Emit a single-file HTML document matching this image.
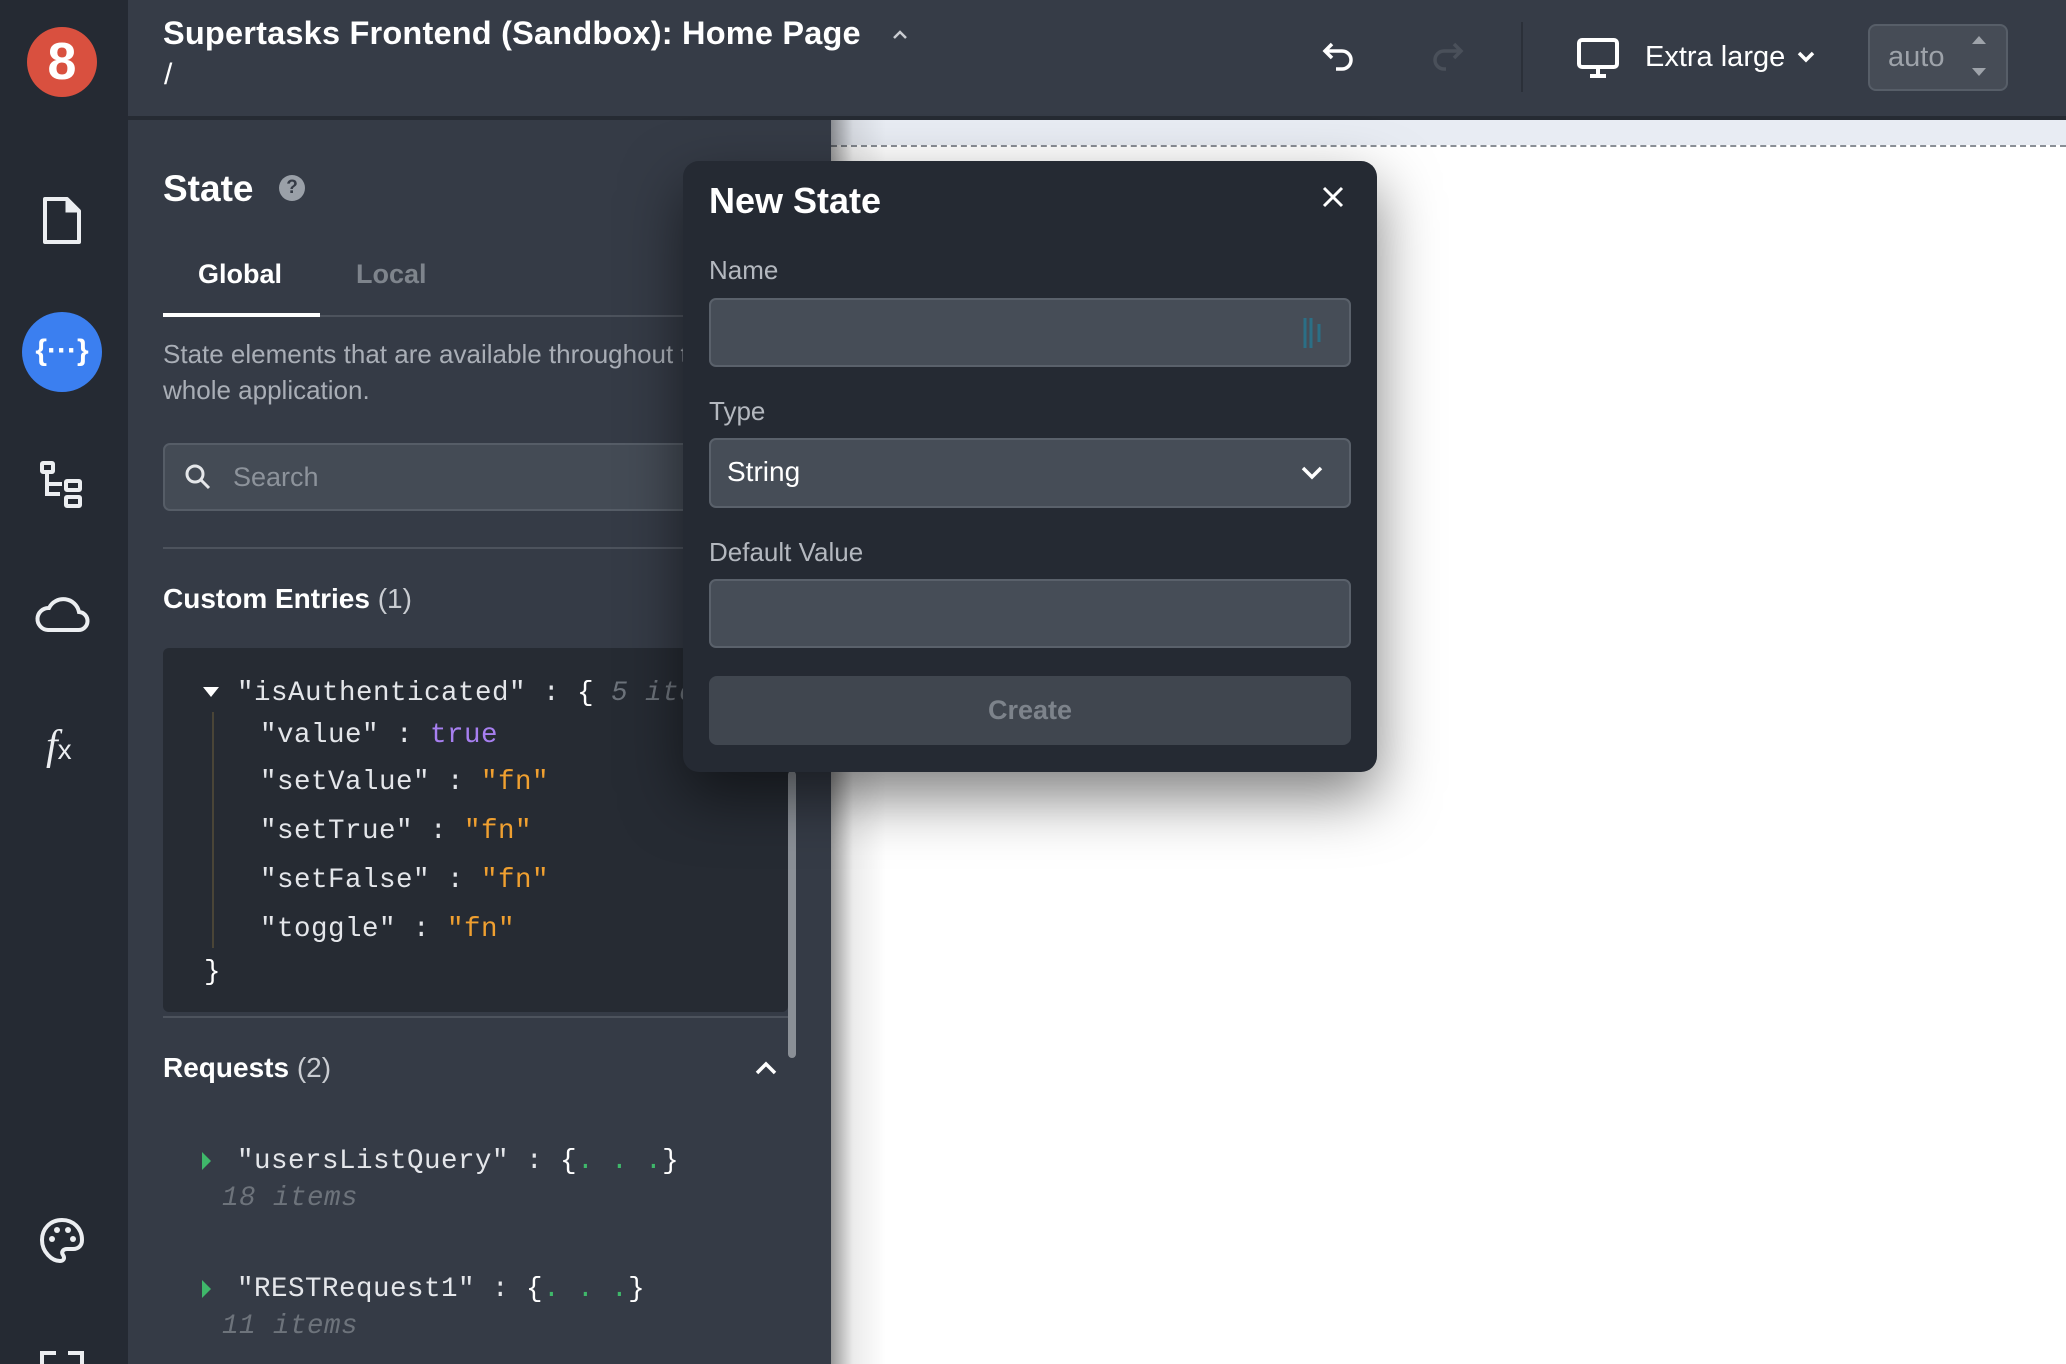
<!DOCTYPE html>
<html><head><meta charset="utf-8">
<style>
*{margin:0;padding:0;box-sizing:border-box}
body{width:2066px;height:1364px;overflow:hidden;background:#fff;font-family:"Liberation Sans",sans-serif;position:relative}
.a{position:absolute}
.mono{font-family:"Liberation Mono",monospace;font-size:27.5px;letter-spacing:0.5px;color:#e4e6ea;white-space:pre}
.lbl{color:#b4b8bf;font-size:26px}
.inp{background:#464d57;border:2px solid #5a616b;border-radius:7px}
</style></head><body>
<!-- canvas -->
<div class="a" style="left:831px;top:120px;width:1235px;height:25px;background:#e8ecf3"></div>
<div class="a" style="left:831px;top:145px;width:1235px;border-top:2px dashed #8a8f96"></div>
<div class="a" style="left:831px;top:120px;width:55px;height:1244px;background:linear-gradient(to right,rgba(0,0,0,0.4),rgba(0,0,0,0.08) 40%,rgba(0,0,0,0))"></div>
<!-- sidebar -->
<div class="a" style="left:0;top:0;width:128px;height:1364px;background:#252a33"></div>
<div class="a" style="left:27px;top:27px;width:70px;height:70px;border-radius:50%;background:#d9503f;color:#fff;font-weight:bold;font-size:52px;text-align:center;line-height:70px">8</div>
<svg class="a" style="left:40px;top:196px" width="44" height="50" viewBox="0 0 44 50"><path d="M5 3h22l12 12v31H5z" fill="none" stroke="#eceef1" stroke-width="4" stroke-linejoin="round"/><path d="M27 3v12h12" fill="#eceef1" stroke="#eceef1" stroke-width="3"/></svg>
<div class="a" style="left:22px;top:312px;width:80px;height:80px;border-radius:50%;background:#3b7ff0;color:#fff;font-size:30px;font-weight:bold;text-align:center;line-height:78px">{···}</div>
<svg class="a" style="left:38px;top:460px" width="50" height="50" viewBox="0 0 50 50" fill="none" stroke="#eceef1" stroke-width="4"><rect x="4" y="3" width="11" height="9" rx="1"/><path d="M9 14v20h13"/><rect x="28" y="21" width="14" height="9" rx="1"/><rect x="28" y="37" width="14" height="9" rx="1"/><path d="M9 24h15"/></svg>
<svg class="a" style="left:34px;top:594px" width="56" height="40" viewBox="0 0 56 40"><path d="M14 36h30a9 9 0 0 0 1-18A16 16 0 0 0 15 14 11 11 0 0 0 14 36z" fill="none" stroke="#eceef1" stroke-width="4"/></svg>
<div class="a" style="left:46px;top:722px;color:#eceef1;font-family:'Liberation Serif',serif;font-style:italic;font-size:42px">f<span style="font-size:28px;font-style:normal;font-family:'Liberation Sans'">x</span></div>
<svg class="a" style="left:38px;top:1216px" width="48" height="50" viewBox="0 0 48 50"><path d="M24 4C12 4 4 13 4 24c0 12 10 21 18 21 4 0 5-3 3-6-2-3 0-6 4-6h6c6 0 9-4 9-9C44 12 35 4 24 4z" fill="none" stroke="#eceef1" stroke-width="4"/><circle cx="14" cy="23" r="3" fill="#eceef1"/><circle cx="19" cy="14" r="3" fill="#eceef1"/><circle cx="30" cy="14" r="3" fill="#eceef1"/><circle cx="35" cy="23" r="3" fill="#eceef1"/></svg>
<svg class="a" style="left:40px;top:1350px" width="44" height="14"><path d="M2 14V3h14M42 14V3H28" fill="none" stroke="#eceef1" stroke-width="4"/></svg>
<!-- top bar -->
<div class="a" style="left:128px;top:0;width:1938px;height:116px;background:#363c47"></div>
<div class="a" style="left:128px;top:116px;width:1938px;height:4px;background:#262b33"></div>
<div class="a" style="left:163px;top:15px;color:#fff;font-weight:bold;font-size:32.5px;letter-spacing:0.2px;white-space:nowrap">Supertasks Frontend (Sandbox): Home Page</div>
<svg class="a" style="left:891px;top:28px" width="18" height="12"><path d="M3 10l6-6 6 6" fill="none" stroke="#c9ccd1" stroke-width="2.5"/></svg>
<div class="a" style="left:164px;top:58px;color:#fff;font-size:30px">/</div>
<svg class="a" style="left:1322px;top:40px" width="36" height="34" viewBox="0 0 36 34"><path d="M10 4L3 11l7 7" fill="none" stroke="#fff" stroke-width="3.5"/><path d="M4 11h16a9 9 0 0 1 0 18h-6" fill="none" stroke="#fff" stroke-width="3.5"/></svg>
<svg class="a" style="left:1428px;top:40px" width="36" height="34" viewBox="0 0 36 34"><path d="M26 4l7 7-7 7" fill="none" stroke="#4a505a" stroke-width="3.5"/><path d="M32 11H16a9 9 0 0 0 0 18h2" fill="none" stroke="#4a505a" stroke-width="3.5"/></svg>
<div class="a" style="left:1521px;top:22px;width:2px;height:70px;background:#2b3039"></div>
<svg class="a" style="left:1576px;top:37px" width="44" height="42" viewBox="0 0 44 42"><rect x="3" y="3" width="38" height="27" rx="3" fill="none" stroke="#fff" stroke-width="4"/><path d="M22 30v8M14 39h16" stroke="#fff" stroke-width="4"/></svg>
<div class="a" style="left:1645px;top:41px;color:#fff;font-size:29px">Extra large</div>
<svg class="a" style="left:1796px;top:50px" width="20" height="14"><path d="M3 3l7 7 7-7" fill="none" stroke="#fff" stroke-width="3.5"/></svg>
<div class="a" style="left:1868px;top:24px;width:140px;height:67px;background:#464c56;border:2px solid #575e68;border-radius:8px"></div>
<div class="a" style="left:1888px;top:41px;color:#9ea3aa;font-size:29px">auto</div>
<svg class="a" style="left:1970px;top:32px" width="18" height="48"><path d="M2 12l7-8 7 8z" fill="#9ea3aa"/><path d="M2 36l7 8 7-8z" fill="#9ea3aa"/></svg>
<!-- left panel -->
<div class="a" style="left:128px;top:120px;width:703px;height:1244px;background:#353b46"></div>
<div class="a" style="left:163px;top:168px;color:#fff;font-weight:bold;font-size:37px">State</div>
<div class="a" style="left:279px;top:175px;width:26px;height:26px;border-radius:50%;background:#9aa0a8;color:#353b46;font-weight:bold;font-size:19px;text-align:center;line-height:26px">?</div>
<div class="a" style="left:198px;top:259px;color:#fff;font-weight:bold;font-size:27px">Global</div>
<div class="a" style="left:356px;top:259px;color:#7e848c;font-weight:bold;font-size:27px">Local</div>
<div class="a" style="left:163px;top:315px;width:660px;height:2px;background:#4d535d"></div>
<div class="a" style="left:163px;top:313px;width:157px;height:4px;background:#fff"></div>
<div class="a" style="left:163px;top:337px;color:#a9aeb6;font-size:26px;line-height:35.5px;width:700px">State elements that are available throughout the<br>whole application.</div>
<div class="a inp" style="left:163px;top:443px;width:640px;height:68px;background:#444b55;border-color:#565d67"></div>
<svg class="a" style="left:184px;top:463px" width="28" height="28"><circle cx="11" cy="11" r="8" fill="none" stroke="#e5e7ea" stroke-width="3"/><path d="M17 17l8 8" stroke="#e5e7ea" stroke-width="3"/></svg>
<div class="a" style="left:233px;top:462px;color:#8d939b;font-size:27px">Search</div>
<div class="a" style="left:163px;top:547px;width:625px;height:2px;background:#4d535d"></div>
<div class="a" style="left:163px;top:583px;color:#fff;font-size:28px"><b>Custom Entries</b> <span style="color:#c9ccd1">(1)</span></div>
<div class="a" style="left:163px;top:648px;width:625px;height:364px;background:#262b33;border-radius:6px"></div>
<svg class="a" style="left:202px;top:686px" width="18" height="12"><path d="M1 1h16L9 11z" fill="#fff"/></svg>
<div class="a mono" style="left:237px;top:678px">"isAuthenticated" : <span style="color:#fff">{</span> <i style="color:#6d737b">5 items</i></div>
<div class="a" style="left:212px;top:712px;width:2px;height:236px;background:#4a4537"></div>
<div class="a mono" style="left:260px;top:720px">"value" : <span style="color:#a77ff0">true</span></div>
<div class="a mono" style="left:260px;top:767px">"setValue" : <span style="color:#f0a030">"fn"</span></div>
<div class="a mono" style="left:260px;top:816px">"setTrue" : <span style="color:#f0a030">"fn"</span></div>
<div class="a mono" style="left:260px;top:865px">"setFalse" : <span style="color:#f0a030">"fn"</span></div>
<div class="a mono" style="left:260px;top:914px">"toggle" : <span style="color:#f0a030">"fn"</span></div>
<div class="a mono" style="left:204px;top:957px;color:#fff">}</div>
<div class="a" style="left:788px;top:771px;width:8px;height:287px;background:#8a8f96;border-radius:4px"></div>
<div class="a" style="left:163px;top:1016px;width:625px;height:2px;background:#4d535d"></div>
<div class="a" style="left:163px;top:1052px;color:#fff;font-size:28px"><b>Requests</b> <span style="color:#c9ccd1">(2)</span></div>
<svg class="a" style="left:754px;top:1060px" width="24" height="16"><path d="M3 13l9-9 9 9" fill="none" stroke="#fff" stroke-width="3.5"/></svg>
<svg class="a" style="left:202px;top:1152px" width="10" height="18"><path d="M0 0l9 9-9 9z" fill="#3fb86a"/></svg>
<div class="a mono" style="left:237px;top:1146px">"usersListQuery" : <span style="color:#fff">{</span><span style="color:#3fb86a">. . .</span><span style="color:#fff">}</span></div>
<div class="a mono" style="left:222px;top:1183px;color:#6d737b;font-style:italic">18 items</div>
<svg class="a" style="left:202px;top:1280px" width="10" height="18"><path d="M0 0l9 9-9 9z" fill="#3fb86a"/></svg>
<div class="a mono" style="left:237px;top:1274px">"RESTRequest1" : <span style="color:#fff">{</span><span style="color:#3fb86a">. . .</span><span style="color:#fff">}</span></div>
<div class="a mono" style="left:222px;top:1311px;color:#6d737b;font-style:italic">11 items</div>
<!-- modal -->
<div class="a" style="left:683px;top:161px;width:694px;height:611px;background:#252a33;border-radius:16px;box-shadow:0 25px 60px rgba(0,0,0,0.5)"></div>
<div class="a" style="left:709px;top:180px;color:#fff;font-weight:bold;font-size:36px">New State</div>
<svg class="a" style="left:1321px;top:185px" width="24" height="24"><path d="M3 3l18 18M21 3L3 21" stroke="#fff" stroke-width="3"/></svg>
<div class="a lbl" style="left:709px;top:255px">Name</div>
<div class="a inp" style="left:709px;top:298px;width:642px;height:69px"></div>
<svg class="a" style="left:1302px;top:316px" width="22" height="34"><path d="M3 2v30M9 2v30M17 8v18" stroke="#2b6f86" stroke-width="3"/></svg>
<div class="a lbl" style="left:709px;top:396px">Type</div>
<div class="a inp" style="left:709px;top:438px;width:642px;height:70px"></div>
<div class="a" style="left:727px;top:456px;color:#fff;font-size:28px">String</div>
<svg class="a" style="left:1300px;top:465px" width="24" height="16"><path d="M3 3l9 9 9-9" fill="none" stroke="#fff" stroke-width="3.5"/></svg>
<div class="a lbl" style="left:709px;top:537px">Default Value</div>
<div class="a inp" style="left:709px;top:579px;width:642px;height:69px"></div>
<div class="a" style="left:709px;top:676px;width:642px;height:69px;background:#40464f;border-radius:8px;color:#7d838b;font-weight:bold;font-size:27px;text-align:center;line-height:69px">Create</div>
</body></html>
